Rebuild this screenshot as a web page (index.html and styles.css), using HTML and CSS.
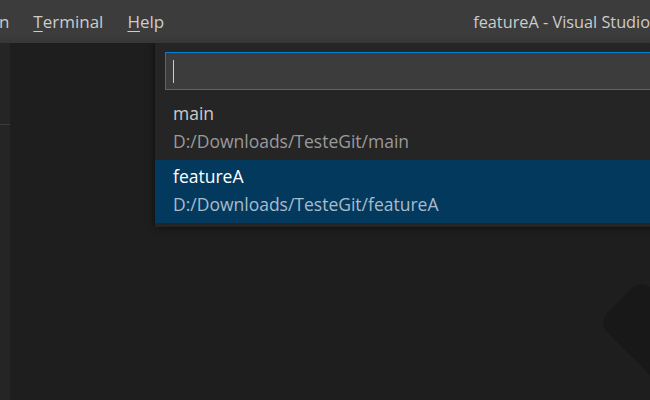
FILE: index.html
```html
<!DOCTYPE html>
<html lang="en">
<head>
    <meta charset="UTF-8">
    <title>featureA - Visual Studio Code</title>
    <link rel="stylesheet" href="styles.css">
</head>
<body>
    <div class="titlebar">
        <div class="menubar">
            <span class="menu-item">Run</span>
            <span class="menu-item"><u>T</u>erminal</span>
            <span class="menu-item"><u>H</u>elp</span>
        </div>
        <div class="window-title">featureA - Visual Studio Code</div>
    </div>
    <div class="workbench">
        <div class="sidebar">
            <div class="sidebar-header"></div>
        </div>
        <div class="editor">
            <div class="quick-pick">
                <div class="quick-input">
                    <span class="caret"></span>
                </div>
                <div class="pick-list">
                    <div class="pick-row">
                        <div class="pick-label">main</div>
                        <div class="pick-detail">D:/Downloads/TesteGit/main</div>
                    </div>
                    <div class="pick-row selected">
                        <div class="pick-label">featureA</div>
                        <div class="pick-detail">D:/Downloads/TesteGit/featureA</div>
                    </div>
                </div>
            </div>
            <div class="watermark"></div>
        </div>
    </div>
</body>
</html>
```

FILE: styles.css
```css
* {
    margin: 0;
    padding: 0;
    box-sizing: border-box;
}

body {
    width: 650px;
    height: 400px;
    overflow: hidden;
    background: #1e1e1e;
    font-family: 'Open Sans', 'Noto Sans', sans-serif;
    color: #cccccc;
    display: flex;
    flex-direction: column;
}

.titlebar {
    height: 43px;
    flex-shrink: 0;
    display: flex;
    align-items: center;
    background: linear-gradient(to bottom, #3c3c3c 80%, #363636);
    white-space: nowrap;
    overflow: hidden;
    font-size: 17px;
}

.menubar {
    display: flex;
    margin-left: -34px;
}

.menu-item {
    padding: 0 12px;
    color: #cccccc;
}

.menu-item u {
    text-underline-offset: 3px;
}

.window-title {
    margin-left: 297px;
    font-size: 16.3px;
    color: #cccccc;
}

.workbench {
    flex: 1;
    display: flex;
}

.sidebar {
    width: 10px;
    background: #252526;
}

.sidebar-header {
    height: 82px;
    border-bottom: 1px solid #3c3c3c;
}

.editor {
    flex: 1;
    position: relative;
    background: #1e1e1e;
    overflow: hidden;
}

/* quick open widget sits on top of the editor */
.quick-pick {
    position: absolute;
    top: 0;
    left: 145px;
    width: 560px;
    background: #252526;
    padding: 9px 0 4px;
    box-shadow: 0 0 8px rgba(0, 0, 0, 0.6);
}

.quick-input {
    height: 38px;
    margin-left: 10px;
    background: #3c3c3c;
    border: 1px solid #007fd4;
    display: flex;
    align-items: center;
    padding-left: 7px;
}

.caret {
    width: 1px;
    height: 23px;
    background: #cccccc;
}

.pick-list {
    margin-top: 7px;
}

.pick-row {
    height: 63px;
    padding: 2px 18px 0;
    font-size: 17.5px;
    line-height: 28px;
}

.pick-label {
    color: #cccccc;
}

.pick-detail {
    color: #9a9a9a;
}

.pick-row.selected {
    background: #04395e;
}

.pick-row.selected .pick-label {
    color: #ffffff;
}

.pick-row.selected .pick-detail {
    color: #a9bccb;
}

.watermark {
    position: absolute;
    left: 595px;
    top: 262px;
    width: 100px;
    height: 62px;
    background: #181818;
    border-radius: 14px;
    transform: rotate(45deg);
}
```
